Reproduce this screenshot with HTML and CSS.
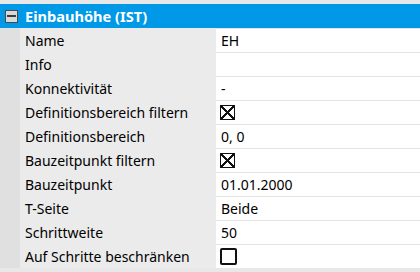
FILE: index.html
```html
<!DOCTYPE html>
<html lang="de">
<head>
    <meta charset="UTF-8">
    <title>Eigenschaften</title>
    <link rel="stylesheet" href="styles.css">
</head>
<body>
<div class="grid">
    <div class="group-header">
        <span class="toggle"><span class="toggle-bar"></span></span>
        <span class="group-title">Einbauhöhe (IST)</span>
    </div>
    <div class="rows">
        <div class="row"><div class="label">Name</div><div class="value">EH</div></div>
        <div class="row"><div class="label">Info</div><div class="value"></div></div>
        <div class="row"><div class="label">Konnektivität</div><div class="value">-</div></div>
        <div class="row"><div class="label">Definitionsbereich filtern</div><div class="value"><span class="check checked"></span></div></div>
        <div class="row"><div class="label">Definitionsbereich</div><div class="value">0, 0</div></div>
        <div class="row"><div class="label">Bauzeitpunkt filtern</div><div class="value"><span class="check checked"></span></div></div>
        <div class="row"><div class="label">Bauzeitpunkt</div><div class="value">01.01.2000</div></div>
        <div class="row"><div class="label">T-Seite</div><div class="value">Beide</div></div>
        <div class="row"><div class="label">Schrittweite</div><div class="value">50</div></div>
        <div class="row"><div class="label">Auf Schritte beschränken</div><div class="value"><span class="check"></span></div></div>
    </div>
</div>
</body>
</html>
```

FILE: styles.css
```css
body {
    margin: 0;
    font-family: "Noto Sans", Arial, sans-serif;
    font-size: 14px;
    color: #000;
    background-color: #e8e8e8;
}

.grid {
    padding-top: 4px;
}

.group-header {
    display: flex;
    align-items: center;
    height: 24px;
    background-color: #0099e8;
    color: #fff;
}

.toggle {
    display: flex;
    align-items: center;
    justify-content: center;
    box-sizing: border-box;
    width: 13px;
    height: 13px;
    margin-left: 5px;
    margin-right: 7px;
    background-color: #d9d9d9;
    border: 1px solid #4a4a4a;
}

.toggle-bar {
    width: 9px;
    height: 2px;
    background-color: #3c3c3c;
}

.group-title {
    font-weight: bold;
    font-size: 14.6px;
}

.rows {
    padding-left: 20px;
    background-color: #e0e0e0;
}

.row {
    display: flex;
    height: 24px;
}

.label {
    width: 196px;
    padding-left: 5px;
    box-sizing: border-box;
    display: flex;
    align-items: center;
    background-color: #ebebeb;
    white-space: nowrap;
}

.value {
    flex: 1;
    display: flex;
    align-items: center;
    box-sizing: border-box;
    padding-left: 5px;
    background-color: #fff;
    border-top: 1px solid #e4e4e4;
}

.check {
    box-sizing: border-box;
    width: 17px;
    height: 17px;
    border: 2px solid #111;
    border-radius: 2px;
    margin-left: -1px;
}

.check.checked {
    width: 15px;
    height: 15px;
    border: 1px solid #111;
    border-radius: 0;
    background:
        linear-gradient(45deg, transparent calc(50% - 0.8px), #111 calc(50% - 0.8px), #111 calc(50% + 0.8px), transparent calc(50% + 0.8px)),
        linear-gradient(-45deg, transparent calc(50% - 0.8px), #111 calc(50% - 0.8px), #111 calc(50% + 0.8px), transparent calc(50% + 0.8px));
}
```
